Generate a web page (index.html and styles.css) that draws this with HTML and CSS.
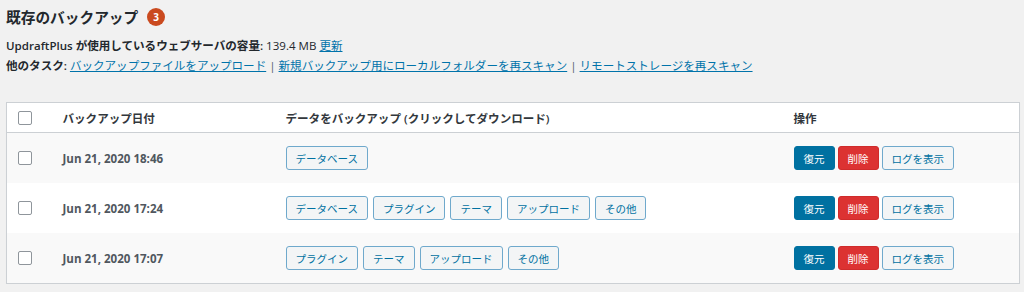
FILE: index.html
```html
<!DOCTYPE html>
<html lang="ja">
<head>
<meta charset="utf-8">
<link rel="stylesheet" href="styles.css">
</head>
<body>
<div class="wrap">
  <h2 class="title">既存のバックアップ<span class="badge">3</span></h2>
  <p class="info"><strong>UpdraftPlus が使用しているウェブサーバの容量:</strong> 139.4 MB <a href="#">更新</a></p>
  <p class="info"><strong>他のタスク:</strong> <a href="#">バックアップファイルをアップロード</a> <span class="sep">|</span> <a href="#">新規バックアップ用にローカルフォルダーを再スキャン</a> <span class="sep">|</span> <a href="#">リモートストレージを再スキャン</a></p>

  <table class="backups">
    <colgroup>
      <col class="c-check"><col class="c-date"><col class="c-data"><col class="c-act">
    </colgroup>
    <thead>
      <tr>
        <th><span class="cb"></span></th>
        <th>バックアップ日付</th>
        <th>データをバックアップ (クリックしてダウンロード)</th>
        <th>操作</th>
      </tr>
    </thead>
    <tbody>
      <tr class="alt">
        <td><span class="cb"></span></td>
        <td class="date">Jun 21, 2020 18:46</td>
        <td><div class="btns"><span class="btn">データベース</span></div></td>
        <td><div class="btns acts"><span class="btn primary">復元</span><span class="btn danger">削除</span><span class="btn">ログを表示</span></div></td>
      </tr>
      <tr>
        <td><span class="cb"></span></td>
        <td class="date">Jun 21, 2020 17:24</td>
        <td><div class="btns"><span class="btn">データベース</span><span class="btn">プラグイン</span><span class="btn">テーマ</span><span class="btn">アップロード</span><span class="btn">その他</span></div></td>
        <td><div class="btns acts"><span class="btn primary">復元</span><span class="btn danger">削除</span><span class="btn">ログを表示</span></div></td>
      </tr>
      <tr class="alt">
        <td><span class="cb"></span></td>
        <td class="date">Jun 21, 2020 17:07</td>
        <td><div class="btns"><span class="btn">プラグイン</span><span class="btn">テーマ</span><span class="btn">アップロード</span><span class="btn">その他</span></div></td>
        <td><div class="btns acts"><span class="btn primary">復元</span><span class="btn danger">削除</span><span class="btn">ログを表示</span></div></td>
      </tr>
    </tbody>
  </table>
</div>
</body>
</html>
```
FILE: styles.css
```css
html, body {
  margin: 0;
  padding: 0;
  background: #f1f1f1;
}
body {
  font-family: "Open Sans", "Noto Sans CJK JP", sans-serif;
  font-size: 11.55px;
  color: #23282d;
}
.wrap {
  padding: 7px 4px 0 6px;
}
.title {
  margin: 0;
  font-size: 14.7px;
  line-height: 20px;
  font-weight: 700;
  color: #23282d;
  display: flex;
  align-items: center;
}
.badge {
  display: inline-flex;
  align-items: center;
  justify-content: center;
  width: 18px;
  height: 18px;
  border-radius: 50%;
  background: #ca4a1f;
  color: #fff;
  font-size: 10px;
  font-weight: 700;
  margin-left: 9px;
}
.info {
  margin: 0;
  line-height: 20px;
}
.title + .info {
  margin-top: 9px;
}
.info strong {
  font-weight: 600;
}
.info a {
  color: #0073aa;
  text-decoration: underline;
}
.sep {
  color: #555d66;
}
.backups {
  margin-top: 26px;
  width: 100%;
  border-collapse: collapse;
  table-layout: fixed;
  background: #fff;
  border: 1px solid #ccd0d4;
  box-shadow: 0 1px 1px rgba(0,0,0,.04);
}
.c-check { width: 56px; }
.c-date { width: 223px; }
.c-data { width: 508px; }
.backups th {
  height: 29px;
  padding: 0;
  text-align: left;
  font-weight: 600;
  color: #32373c;
  border-bottom: 1px solid #ccd0d4;
  vertical-align: middle;
}
.backups td {
  height: 50px;
  padding: 0;
  vertical-align: middle;
}
.backups tr.alt td {
  background: #f9f9f9;
}
.cb {
  display: block;
  width: 14px;
  height: 14px;
  margin-left: 11px;
  box-sizing: border-box;
  border: 1px solid #8f959b;
  border-radius: 2px;
  background: #fff;
}
.date {
  font-weight: 700;
  color: #50575e;
}
.btns {
  display: flex;
  gap: 5px;
}
.btns.acts {
  gap: 3px;
}
.btn {
  display: inline-flex;
  align-items: center;
  box-sizing: border-box;
  height: 24px;
  padding: 0 9px;
  font-size: 10.5px;
  color: #0071a1;
  background: #f3f5f6;
  border: 1px solid #6fa9cc;
  border-radius: 3px;
  white-space: nowrap;
}
.btn.primary {
  background: #0071a1;
  border-color: #0071a1;
  color: #fff;
}
.btn.danger {
  background: #dc3232;
  border-color: #cf2b2b;
  color: #fff;
}
```
